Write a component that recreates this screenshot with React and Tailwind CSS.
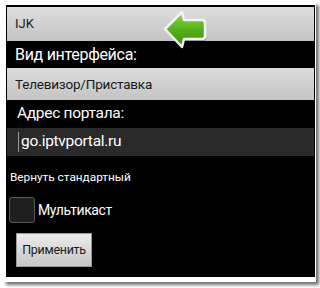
const Arrow = () => (
  <svg className="absolute left-[154px] top-[2px]" width="50" height="46" viewBox="0 0 50 46">
    <defs>
      <linearGradient id="g" x1="0" y1="0" x2="0" y2="1">
        <stop offset="0" stopColor="#8fd84e" />
        <stop offset="0.5" stopColor="#56b11c" />
        <stop offset="1" stopColor="#3a8c0c" />
      </linearGradient>
    </defs>
    <path
      d="M5 22 L22 5 L24 13 L42 13 Q45 13 45 16 L45 29 Q45 32 42 32 L24 32 L22 40 Z"
      fill="#000"
      opacity="0.35"
      transform="translate(1 2)"
    />
    <path
      d="M5 22 L22 5 L24 13 L42 13 Q45 13 45 16 L45 29 Q45 32 42 32 L24 32 L22 40 Z"
      fill="url(#g)"
      stroke="#f4f4f4"
      strokeWidth="2.5"
      strokeLinejoin="round"
    />
  </svg>
);

const App = () => {
  return (
    <main className="w-[320px] h-[288px] bg-white pt-[2px] pl-[3px] font-['Roboto',sans-serif]">
      <div className="w-[313px] h-[280px] bg-white pt-[3px] pl-[3px] pr-[1px] shadow-[3px_3px_3px_rgba(0,0,0,0.55)]">
        <div className="relative h-[272px] bg-black px-[1px] pt-[2px]">
          <div className="h-[34px] flex items-center pl-[8px] bg-gradient-to-b from-[#dedede] to-[#c3c3c3] text-[13px] text-[#1a1a1a]">
            IJK
          </div>
          <div className="h-[27px] flex items-center pl-[8px] text-[16px] tracking-[-0.3px] text-white">Вид интерфейса:</div>
          <div className="h-[32px] flex items-center pl-[8px] bg-gradient-to-b from-[#dcdcdc] to-[#c4c4c4] text-[13.5px] tracking-[-0.2px] text-[#1a1a1a]">
            Телевизор/Приставка
          </div>
          <div className="h-[28px] flex items-center pl-[10px] text-[15.5px] tracking-[-0.3px] text-white">Адрес портала:</div>
          <div className="h-[28px] flex items-center pl-[11px] bg-[#2a2a2a] text-[15.5px] tracking-[-0.3px] text-white">
            <span className="w-[1px] h-[20px] bg-[#9a9a9a] mr-[2px]" />
            go.iptvportal.ru
          </div>
          <div className="h-[41px] flex items-center pl-[3px] pt-[3px] text-[11.8px] text-white">Вернуть стандартный</div>
          <div className="flex items-center gap-[3px] pl-[2px]">
            <div className="w-[26px] h-[26px] rounded-[3px] border border-[#5a5a5a] bg-[#1f1f1f]" />
            <span className="text-[14px] tracking-[-0.4px] text-white">Мультикаст</span>
          </div>
          <div className="pl-[9px] pt-[10px]">
            <button className="w-[76px] h-[34px] bg-gradient-to-b from-[#ececec] to-[#c6c6c6] border border-[#9a9a9a] text-[12.5px] tracking-[-0.3px] text-[#1a1a1a]">
              Применить
            </button>
          </div>
          <Arrow />
        </div>
      </div>
    </main>
  );
};

export default App;
